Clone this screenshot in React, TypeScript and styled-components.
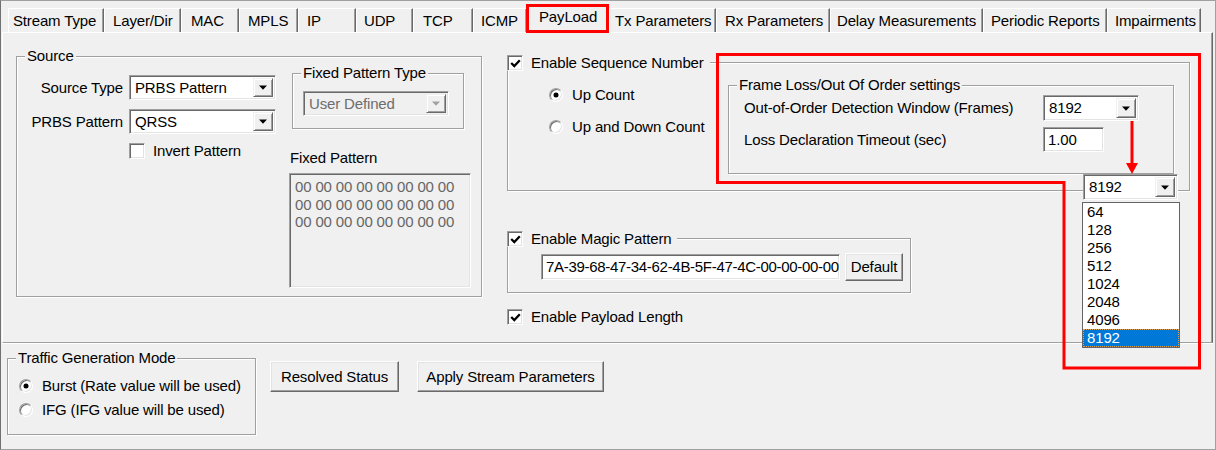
import React from "react";
import styled, { createGlobalStyle, css } from "styled-components";

const GlobalStyle = createGlobalStyle`
  html, body { margin: 0; padding: 0; background: #f0f0f0; }
  body {
    font-family: "Liberation Sans", Arial, Helvetica, sans-serif;
    font-size: 15px;
    letter-spacing: -0.15px;
    color: #000;
  }
  *, *::before, *::after { box-sizing: border-box; }
`;

const sunken = css`
  border: 1px solid;
  border-color: #a0a0a0 #ffffff #ffffff #a0a0a0;
  box-shadow: inset 1px 1px 0 #696969, inset -1px -1px 0 #e3e3e3;
`;

const raised = css`
  border: 1px solid;
  border-color: #ffffff #696969 #696969 #ffffff;
  box-shadow: inset -1px -1px 0 #a0a0a0, inset 1px 1px 0 #e3e3e3;
`;

const Window = styled.div`
  position: relative;
  width: 1216px;
  height: 450px;
  background: #f0f0f0;
  border: 1px solid #a0a0a0;
  border-left-color: #707070;
  display: flex;
  flex-direction: column;
  line-height: 16px;
  overflow: hidden;
`;

/* ---------- tabs ---------- */
const TabStrip = styled.div`
  position: relative;
  z-index: 1;
  display: flex;
  align-items: flex-end;
  height: 31px;
  padding-left: 7px;
`;

const Tab = styled.div<{ $w: number; $pad: number; $active?: boolean }>`
  flex: none;
  width: ${(p) => p.$w}px;
  height: 24px;
  padding-left: ${(p) => p.$pad}px;
  display: flex;
  align-items: center;
  white-space: nowrap;
  background: #f0f0f0;
  border-top: 1px solid #ffffff;
  border-left: 1px solid #ffffff;
  border-right: 1px solid #696969;
  box-shadow: inset -1px 0 0 #a0a0a0;
  ${(p) =>
    p.$active &&
    css`
      height: 29px;
      margin-bottom: -1px;
      align-items: flex-start;
      padding-top: 4px;
    `}
`;

const TABS = [
  { label: "Stream Type", w: 96, pad: 4 },
  { label: "Layer/Dir", w: 77, pad: 8 },
  { label: "MAC", w: 58, pad: 9 },
  { label: "MPLS", w: 59, pad: 8 },
  { label: "IP", w: 58, pad: 8 },
  { label: "UDP", w: 57, pad: 7 },
  { label: "TCP", w: 60, pad: 9 },
  { label: "ICMP", w: 54, pad: 7 },
  { label: "PayLoad", w: 82, pad: 11, active: true },
  { label: "Tx Parameters", w: 107, pad: 5 },
  { label: "Rx Parameters", w: 114, pad: 8 },
  { label: "Delay Measurements", w: 153, pad: 6 },
  { label: "Periodic Reports", w: 124, pad: 7 },
  { label: "Impairments", w: 94, pad: 7 },
];

/* ---------- panel ---------- */
const Panel = styled.div`
  flex: none;
  margin: 0 2px 0 1px;
  height: 311px;
  border-top: 1px solid #ffffff;
  border-left: 1px solid #ffffff;
  border-right: 1px solid #696969;
  border-bottom: 1px solid #a0a0a0;
  box-shadow: inset -1px 0 0 #a0a0a0, 0 1px 0 #ffffff;
  display: flex;
  align-items: flex-start;
  padding-left: 13px;
`;

const GroupBox = styled.div`
  position: relative;
  flex: none;
  border: 1px solid #a0a0a0;
  box-shadow: inset 1px 1px 0 #ffffff, 1px 1px 0 #ffffff;
`;

const Caption = styled.div`
  position: absolute;
  top: -9px;
  left: 8px;
  padding: 0 2px;
  background: #f0f0f0;
  line-height: 16px;
  white-space: nowrap;
`;

const CheckCaption = styled.label`
  position: absolute;
  top: -8px;
  left: -1px;
  display: flex;
  align-items: center;
  gap: 8px;
  padding-right: 6px;
  background: #f0f0f0;
  white-space: nowrap;
`;

/* ---------- controls ---------- */
const CheckBox = styled.span`
  flex: none;
  width: 16px;
  height: 16px;
  background: #ffffff;
  ${sunken}
  display: flex;
  align-items: center;
  justify-content: center;
`;

const Radio = styled.span<{ $on?: boolean }>`
  flex: none;
  position: relative;
  width: 14px;
  height: 14px;
  border-radius: 50%;
  background: #ffffff;
  border: 1px solid;
  border-color: #a0a0a0 #ffffff #ffffff #a0a0a0;
  box-shadow: inset 1px 1px 0 #696969, inset -1px -1px 0 #e3e3e3;
  ${(p) =>
    p.$on &&
    css`
      &::after {
        content: "";
        position: absolute;
        left: 4px;
        top: 4px;
        width: 4px;
        height: 4px;
        border-radius: 50%;
        background: #000;
        box-shadow: 0 0 0 0.5px #000;
      }
    `}
`;

const Combo = styled.div<{ $w: number; $h: number; $disabled?: boolean }>`
  flex: none;
  width: ${(p) => p.$w}px;
  height: ${(p) => p.$h}px;
  ${sunken}
  background: ${(p) => (p.$disabled ? "#f0f0f0" : "#ffffff")};
  color: ${(p) => (p.$disabled ? "#6d6d6d" : "#000")};
  display: flex;
  align-items: center;
  padding: 2px;
`;

const ComboText = styled.span`
  flex: 1;
  padding-left: 3px;
  white-space: nowrap;
  overflow: hidden;
`;

const ComboButton = styled.span`
  flex: none;
  width: 20px;
  align-self: stretch;
  background: #f0f0f0;
  border: 1px solid;
  border-color: #f0f0f0 #696969 #696969 #f0f0f0;
  box-shadow: inset 1px 1px 0 #ffffff, inset -1px -1px 0 #a0a0a0;
  display: flex;
  align-items: center;
  justify-content: center;
`;

const TextBox = styled.div<{ $w: number; $h: number; $tight?: boolean }>`
  flex: none;
  width: ${(p) => p.$w}px;
  height: ${(p) => p.$h}px;
  ${sunken}
  background: #ffffff;
  display: flex;
  align-items: center;
  padding-left: 4px;
  white-space: nowrap;
  overflow: hidden;
  ${(p) =>
    p.$tight &&
    css`
      letter-spacing: -0.3px;
    `}
`;

const PushButton = styled.button<{ $w: number; $h: number }>`
  flex: none;
  width: ${(p) => p.$w}px;
  height: ${(p) => p.$h}px;
  margin: 0;
  padding: 0;
  font: inherit;
  letter-spacing: inherit;
  color: #000;
  background: #f0f0f0;
  ${raised}
  display: flex;
  align-items: center;
  justify-content: center;
  white-space: nowrap;
`;

const Option = styled.label`
  display: flex;
  align-items: center;
  gap: 9px;
  height: 20px;
  white-space: nowrap;
`;

const CheckRow = styled.label`
  display: flex;
  align-items: center;
  gap: 8px;
  white-space: nowrap;
`;

/* ---------- source section ---------- */
const SourceBox = styled(GroupBox)`
  margin-top: 23px;
  width: 466px;
  height: 241px;
`;

const SourceInner = styled.div`
  display: flex;
  align-items: flex-start;
  padding-top: 16px;
`;

const SourceFields = styled.div`
  display: grid;
  grid-template-columns: 106px 147px;
  column-gap: 6px;
  row-gap: 9px;
  align-items: center;
  padding-top: 2px;
`;

const FieldLabel = styled.span`
  justify-self: end;
  white-space: nowrap;
`;

const InvertRow = styled(CheckRow)`
  grid-column: 2;
`;

const FixedColumn = styled.div`
  display: flex;
  flex-direction: column;
  margin-left: 13px;
  width: 182px;
`;

const FixedTypeBox = styled(GroupBox)`
  margin-left: 3px;
  width: 172px;
  height: 56px;
  padding: 17px 0 0 10px;
`;

const FixedPatternLabel = styled.div`
  margin: 21px 0 0 1px;
`;

const PatternArea = styled.div`
  margin-top: 7px;
  width: 182px;
  height: 115px;
  ${sunken}
  background: #f0f0f0;
  color: #666666;
  padding: 4px 0 0 5px;
  line-height: 17.5px;
  white-space: pre;
`;

/* ---------- right section ---------- */
const RightColumn = styled.div`
  display: flex;
  flex-direction: column;
  margin-left: 25px;
`;

const SeqBox = styled(GroupBox)`
  margin-top: 29px;
  width: 683px;
  height: 129px;
  display: flex;
  justify-content: space-between;
  align-items: flex-start;
`;

const CountOptions = styled.div`
  display: flex;
  flex-direction: column;
  gap: 12px;
  padding: 22px 0 0 41px;
`;

const FrameBox = styled(GroupBox)`
  margin: 22px 15px 0 0;
  width: 446px;
  height: 89px;
`;

const FrameGrid = styled.div`
  display: grid;
  grid-template-columns: 299px auto;
  row-gap: 6px;
  align-items: center;
  padding: 9px 0 0 15px;
`;

const FrameLabel = styled.span`
  white-space: nowrap;
`;

const MagicBox = styled(GroupBox)`
  margin-top: 47px;
  width: 404px;
  height: 55px;
`;

const MagicRow = styled.div`
  display: flex;
  align-items: center;
  gap: 5px;
  padding: 14px 0 0 33px;
`;

const PayloadRow = styled(CheckRow)`
  margin-top: 16px;
`;

/* ---------- bottom ---------- */
const BottomBar = styled.div`
  display: flex;
  align-items: flex-start;
  padding-left: 6px;
`;

const TrafficBox = styled(GroupBox)`
  margin-top: 15px;
  width: 249px;
  height: 77px;
`;

const TrafficOptions = styled.div`
  display: flex;
  flex-direction: column;
  gap: 4px;
  padding: 17px 0 0 11px;
`;

const ActionButtons = styled.div`
  display: flex;
  gap: 18px;
  margin: 18px 0 0 14px;
`;

/* ---------- overlay: open dropdown ---------- */
const DropDown = styled.div`
  position: absolute;
  left: 1081px;
  top: 173px;
  display: flex;
  flex-direction: column;
  align-items: flex-start;
  gap: 2px;
  z-index: 2;
`;

const DropCombo = styled(Combo)`
  margin-left: 1px;
`;

const DropList = styled.div`
  width: 98px;
  background: #ffffff;
  border: 1px solid #646464;
`;

const DropItem = styled.div<{ $selected?: boolean }>`
  height: 18px;
  line-height: 18px;
  padding-left: 4px;
  ${(p) =>
    p.$selected &&
    css`
      background: #0078d7;
      color: #ffffff;
      outline: 1px dotted #d8a058;
      outline-offset: -1px;
    `}
`;

const Annotation = styled.svg`
  position: absolute;
  left: -1px;
  top: -1px;
  pointer-events: none;
  z-index: 3;
`;

/* ---------- small drawings ---------- */
const CheckMark = () => (
  <svg width="11" height="9" viewBox="0 0 11 9">
    <path d="M1.2 4 L4.3 7 L9.8 1.2" fill="none" stroke="#000" strokeWidth="2.3" />
  </svg>
);

const DownArrow = ({ color = "#000" }: { color?: string }) => (
  <svg width="8" height="5" viewBox="0 0 8 5">
    <polygon points="0,0.5 8,0.5 4,4.8" fill={color} />
  </svg>
);

const ComboBox = ({
  value,
  w,
  h,
  disabled,
}: {
  value: string;
  w: number;
  h: number;
  disabled?: boolean;
}) => (
  <Combo $w={w} $h={h} $disabled={disabled}>
    <ComboText>{value}</ComboText>
    <ComboButton>
      <DownArrow color={disabled ? "#a0a0a0" : "#000"} />
    </ComboButton>
  </Combo>
);

const ITEMS = ["64", "128", "256", "512", "1024", "2048", "4096", "8192"];

export default function App() {
  return (
    <>
      <GlobalStyle />
      <Window>
        <TabStrip>
          {TABS.map((t) => (
            <Tab key={t.label} $w={t.w} $pad={t.pad} $active={t.active}>
              {t.label}
            </Tab>
          ))}
        </TabStrip>

        <Panel>
          <SourceBox>
            <Caption>Source</Caption>
            <SourceInner>
              <SourceFields>
                <FieldLabel>Source Type</FieldLabel>
                <ComboBox value="PRBS Pattern" w={147} h={25} />
                <FieldLabel>PRBS Pattern</FieldLabel>
                <ComboBox value="QRSS" w={147} h={25} />
                <InvertRow>
                  <CheckBox />
                  Invert Pattern
                </InvertRow>
              </SourceFields>
              <FixedColumn>
                <FixedTypeBox>
                  <Caption>Fixed Pattern Type</Caption>
                  <ComboBox value="User Defined" w={146} h={25} disabled />
                </FixedTypeBox>
                <FixedPatternLabel>Fixed Pattern</FixedPatternLabel>
                <PatternArea>
                  {"00 00 00 00 00 00 00 00\n00 00 00 00 00 00 00 00\n00 00 00 00 00 00 00 00"}
                </PatternArea>
              </FixedColumn>
            </SourceInner>
          </SourceBox>

          <RightColumn>
            <SeqBox>
              <CheckCaption>
                <CheckBox>
                  <CheckMark />
                </CheckBox>
                Enable Sequence Number
              </CheckCaption>
              <CountOptions>
                <Option>
                  <Radio $on />
                  Up Count
                </Option>
                <Option>
                  <Radio />
                  Up and Down Count
                </Option>
              </CountOptions>
              <FrameBox>
                <Caption>Frame Loss/Out Of Order settings</Caption>
                <FrameGrid>
                  <FrameLabel>Out-of-Order Detection Window (Frames)</FrameLabel>
                  <ComboBox value="8192" w={96} h={26} />
                  <FrameLabel>Loss Declaration Timeout (sec)</FrameLabel>
                  <TextBox $w={61} $h={25}>1.00</TextBox>
                </FrameGrid>
              </FrameBox>
            </SeqBox>

            <MagicBox>
              <CheckCaption>
                <CheckBox>
                  <CheckMark />
                </CheckBox>
                Enable Magic Pattern
              </CheckCaption>
              <MagicRow>
                <TextBox $w={299} $h={26} $tight>
                  7A-39-68-47-34-62-4B-5F-47-4C-00-00-00-00
                </TextBox>
                <PushButton $w={58} $h={28}>Default</PushButton>
              </MagicRow>
            </MagicBox>

            <PayloadRow>
              <CheckBox>
                <CheckMark />
              </CheckBox>
              Enable Payload Length
            </PayloadRow>
          </RightColumn>
        </Panel>

        <BottomBar>
          <TrafficBox>
            <Caption>Traffic Generation Mode</Caption>
            <TrafficOptions>
              <Option>
                <Radio $on />
                Burst (Rate value will be used)
              </Option>
              <Option>
                <Radio />
                IFG (IFG value will be used)
              </Option>
            </TrafficOptions>
          </TrafficBox>
          <ActionButtons>
            <PushButton $w={129} $h={31}>Resolved Status</PushButton>
            <PushButton $w={187} $h={31}>Apply Stream Parameters</PushButton>
          </ActionButtons>
        </BottomBar>

        <DropDown>
          <DropCombo $w={95} $h={26}>
            <ComboText>8192</ComboText>
            <ComboButton>
              <DownArrow />
            </ComboButton>
          </DropCombo>
          <DropList>
            {ITEMS.map((v) => (
              <DropItem key={v} $selected={v === "8192"}>
                {v}
              </DropItem>
            ))}
          </DropList>
        </DropDown>

        <Annotation width="1216" height="450" viewBox="0 0 1216 450">
          <rect x="527.5" y="5.5" width="80" height="26" fill="none" stroke="#ff0000" strokeWidth="3" />
          <path
            d="M717.5 54.5 H1199.5 V368 H1064 V182.5 H717.5 Z"
            fill="none"
            stroke="#ff0000"
            strokeWidth="3"
          />
          <path d="M1132 121 V165" stroke="#ff0000" strokeWidth="3" />
          <polygon points="1126,163 1138,163 1132,174" fill="#ff0000" />
        </Annotation>
      </Window>
    </>
  );
}
